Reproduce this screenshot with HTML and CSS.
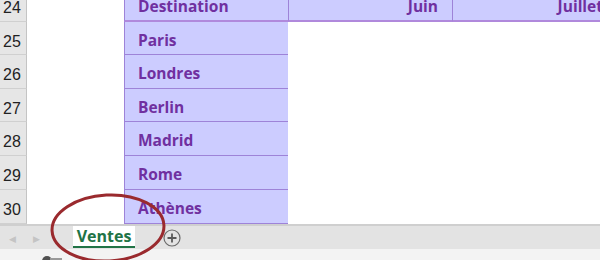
FILE: index.html
```html
<!DOCTYPE html>
<html lang="fr">
<head>
    <meta charset="UTF-8">
    <title>Ventes</title>
    <link rel="stylesheet" href="styles.css">
</head>
<body>
    <div class="grid">
        <div class="row head">
            <div class="num">24</div>
            <div class="blank"></div>
            <div class="cell">Destination</div>
            <div class="cell right">Juin</div>
            <div class="cell right last">Juillet</div>
        </div>
        <div class="row short">
            <div class="num">25</div>
            <div class="blank"></div>
            <div class="cell">Paris</div>
        </div>
        <div class="row">
            <div class="num">26</div>
            <div class="blank"></div>
            <div class="cell">Londres</div>
        </div>
        <div class="row short">
            <div class="num">27</div>
            <div class="blank"></div>
            <div class="cell">Berlin</div>
        </div>
        <div class="row">
            <div class="num">28</div>
            <div class="blank"></div>
            <div class="cell">Madrid</div>
        </div>
        <div class="row">
            <div class="num">29</div>
            <div class="blank"></div>
            <div class="cell">Rome</div>
        </div>
        <div class="row">
            <div class="num">30</div>
            <div class="blank"></div>
            <div class="cell">Athènes</div>
        </div>
    </div>

    <!-- Sheet tabs -->
    <div class="tabs">
        <span class="nav">&#9664;</span>
        <span class="nav">&#9654;</span>
        <div class="tab">Ventes</div>
        <svg class="add" width="18" height="18" viewBox="0 0 18 18">
            <circle cx="9" cy="9" r="8" fill="none" stroke="#6b6b6b" stroke-width="1.2"/>
            <path d="M9 4.5v9M4.5 9h9" stroke="#5a5a5a" stroke-width="1.8"/>
        </svg>
        <svg class="circle" width="130" height="80" viewBox="0 0 130 80">
            <ellipse cx="65" cy="38" rx="56" ry="33" fill="none" stroke="#9a2a2e" stroke-width="3" transform="rotate(-3 65 38)"/>
        </svg>
    </div>
    <div class="status">
        <span class="knob"></span>
        <span class="bar"></span>
    </div>
</body>
</html>
```

FILE: styles.css
```css
/* General */
body {
    margin: 0;
    width: 600px;
    height: 260px;
    overflow: hidden;
    background: #ffffff;
    font-family: "Open Sans", "Noto Sans", sans-serif;
}

/* Sheet grid */
.grid {
    margin-top: -12px;
    height: 236px;
    overflow: hidden;
}

.row {
    display: flex;
    height: 34px;
}

.row.short {
    height: 33px;
}

.num {
    box-sizing: border-box;
    width: 27px;
    flex: none;
    background-color: #e6e6e6;
    border-right: 1px solid #c4c4c4;
    border-bottom: 1px solid #d0d0d0;
    font-family: "Liberation Sans", sans-serif;
    font-size: 16px;
    color: #222;
    padding: 11px 0 0 3px;
}

.blank {
    width: 97px;
    flex: none;
}

.cell {
    box-sizing: border-box;
    width: 164px;
    flex: none;
    background-color: #ccccff;
    border-left: 1px solid #9e83d8;
    border-bottom: 1px solid #9e83d8;
    color: #7030a0;
    font-weight: 700;
    font-size: 15.5px;
    padding: 7px 0 0 13px;
}

.head .cell {
    border-bottom: 2px solid #b089dc;
}

.cell.right {
    text-align: right;
    padding: 7px 14px 0 0;
}

.cell.last {
    padding-right: 13px;
}

/* Tab bar */
.tabs {
    position: relative;
    display: flex;
    align-items: flex-start;
    height: 23px;
    background-color: #e3e3e3;
    border-top: 2px solid #cfcfcf;
}

.nav {
    color: #c4c4c4;
    font-size: 9px;
    margin: 6px 0 0 9px;
    width: 15px;
}

.tab {
    box-sizing: border-box;
    margin-left: 25px;
    width: 62px;
    height: 22px;
    background: #ffffff;
    border-bottom: 2px solid #217346;
    color: #217346;
    font-weight: 700;
    font-size: 16px;
    text-align: center;
    line-height: 20px;
}

.add {
    margin: 3px 0 0 28px;
}

.circle {
    position: absolute;
    left: 43px;
    top: -36px;
    z-index: 2;
}

.status {
    position: relative;
    height: 12px;
    background-color: #f3f3f3;
}

.knob {
    position: absolute;
    left: 42px;
    top: 7px;
    width: 10px;
    height: 10px;
    border-radius: 50%;
    background: #505050;
}

.bar {
    position: absolute;
    left: 50px;
    top: 9px;
    width: 12px;
    height: 3px;
    background: #9a9a9a;
}
```
